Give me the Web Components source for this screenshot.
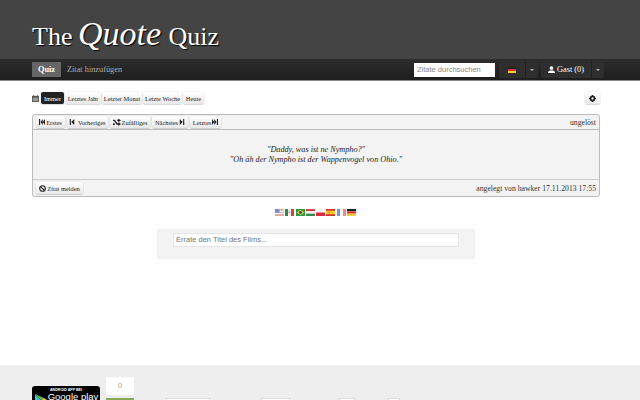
<!DOCTYPE html>
<html>
<head>
<meta charset="utf-8">
<title>The Quote Quiz</title>
<style>
    html, body { margin: 0; height: 400px; overflow: hidden; background: #fff; }
    body { font-family: "Liberation Serif", serif; display: flex; flex-direction: column; }
    quiz-main { flex: 1; }
</style>
</head>
<body>
<quiz-header></quiz-header>
<quiz-main></quiz-main>
<quiz-footer></quiz-footer>
<script>
{
    const flags = {
        de: '<rect width="12" height="3" fill="#222"/><rect y="3" width="12" height="3" fill="#d33"/><rect y="6" width="12" height="3" fill="#ec3"/>',
        us: '<rect width="12" height="9" fill="#e8a8a8"/><rect y="2" width="12" height="1.5" fill="#fff"/><rect y="5" width="12" height="1.5" fill="#fff"/><rect width="6" height="5" fill="#7a8fc8"/>',
        mx: '<rect width="4" height="9" fill="#2a8a50"/><rect x="4" width="4" height="9" fill="#f4f4f4"/><rect x="8" width="4" height="9" fill="#d84040"/><circle cx="6" cy="4.5" r="1" fill="#a87"/>',
        br: '<rect width="12" height="9" fill="#2a9a40"/><path d="M6 1 11 4.5 6 8 1 4.5z" fill="#ec3"/><circle cx="6" cy="4.5" r="1.8" fill="#247"/>',
        hu: '<rect width="12" height="3" fill="#d04848"/><rect y="3" width="12" height="3" fill="#f4f4f4"/><rect y="6" width="12" height="3" fill="#3a8a50"/>',
        pl: '<rect width="12" height="4.5" fill="#f4f4f4"/><rect y="4.5" width="12" height="4.5" fill="#e02840"/>',
        es: '<rect width="12" height="9" fill="#d83030"/><rect y="2.2" width="12" height="4.6" fill="#f6c820"/><rect x="3" y="3.4" width="2" height="2.2" fill="#b85"/>',
        fr: '<rect width="4" height="9" fill="#7a90d8"/><rect x="4" width="4" height="9" fill="#f6f6f6"/><rect x="8" width="4" height="9" fill="#e88"/>'
    };
    const flag = (code, w, h) => `<svg width="${w}" height="${h}" viewBox="0 0 12 9" preserveAspectRatio="none" style="display:block;flex:none">${flags[code]}</svg>`;

    // small glyph icons, 8x8
    const icons = {
        first: '<path d="M0 0h1.500v8H0zM2 4l3-4v8zM5 4l3-4v8z"/>',
        prev: '<path d="M1 0h1.500v8H1zM3 4l4-4v8z"/>',
        shuffle: '<path d="M0 1.500h2l3 4h1V4l3 2.200L6 8.400V7H4.200l-3-4H0zM0 5.500h1.500l.8 1-.8 1H0zM4.200 1.500H6V0l3 2.200L6 4.400V3H5z"/>',
        next: '<path d="M1 0l4 4-4 4zM5.500 0H7v8H5.500z"/>',
        last: '<path d="M0 0l3 4-3 4zM3 0l3 4-3 4zM6.500 0H8v8H6.500z"/>',
        ban: '<circle cx="4" cy="4" r="3.200" fill="none" stroke="currentColor" stroke-width="1.300"/><path d="M1.800 1.800l4.400 4.400" stroke="currentColor" stroke-width="1.300"/>',
        user: '<circle cx="4" cy="2.300" r="2.100"/><path d="M0 8c0-2.400 1.500-3 4-3s4 .6 4 3z"/>',
        cal: '<path d="M0 1h8v7H0z"/><path d="M1 3h6v4H1z" fill="#999"/><path d="M1.500 0h1v2h-1zM5.500 0h1v2h-1z"/>',
        cog: '<circle cx="4" cy="4" r="2.300" fill="none" stroke="currentColor" stroke-width="2"/><path d="M3.300 0h1.400v1.500H3.300zM3.300 6.500h1.400V8H3.300zM0 3.300h1.500v1.400H0zM6.500 3.300H8v1.400H6.500z"/>'
    };
    const icon = (name, size = 8) => `<svg width="${size}" height="${size}" viewBox="0 0 ${name === 'shuffle' ? 9 : 8} 8" fill="currentColor" style="display:block;flex:none">${icons[name]}</svg>`;

    window.customElements.define('quiz-button', class extends HTMLElement {
        constructor() {
            super();
            this.attachShadow({ mode: 'open' }).innerHTML = `
                <style>
                    :host {
                        display: inline-flex; align-items: center; justify-content: center; gap: 1px; height: 12px; box-sizing: border-box;
                        font-size: 6.4px; color: #222; white-space: nowrap; flex: none;
                        background: linear-gradient(#fff, #e8e8e8);
                        border-radius: 2px;
                        box-shadow: 0 0 0 .5px rgba(0,0,0,.08), 0 1px 1px rgba(0,0,0,.12);
                    }
                    :host([active]) { background: #222; color: #fff; }
                </style>
                <slot></slot>
            `;
        }
    });

    window.customElements.define('quiz-header', class extends HTMLElement {
        constructor() {
            super();
            this.attachShadow({ mode: 'open' }).innerHTML = `
                <style>
                    :host { display: block; }
                    .top { height: 59px; background: #444; box-sizing: border-box; padding: 16px 0 0 32px;
                        color: #fff; font-size: 26px; line-height: 36px; text-shadow: 1px 1px 1px #000; white-space: nowrap; }
                    .top i { font-size: 34px; margin: 0 1px 0 -1px; }
                    nav { height: 22px; box-sizing: border-box; background: linear-gradient(#2c2c2c, #1e1e1e); border-bottom: 1px solid #888;
                        display: flex; align-items: center; padding-left: 32px; padding-right: 36px; font-size: 8.300px; }
                    .tab { background: #666; color: #fff; height: 15px; width: 29px; display: flex; align-items: center;
                        justify-content: center; font-weight: bold; }
                    .link { color: #aaa; margin-left: 6px; }
                    .search { margin-left: auto; width: 81px; height: 14px; background: #fff; color: #888;
                        font: 7.500px/14px "Liberation Sans", sans-serif; padding-left: 3px; box-sizing: border-box; }
                    .split { display: flex; height: 17px; margin-left: 4px; border-radius: 2px; background: #2e2e2e; color: #fff; align-items: center; }
                    .main { display: flex; align-items: center; justify-content: center; gap: 2px; height: 100%; border-right: 1px solid #222; }
                    .caret { width: 12px; display: flex; justify-content: center; }
                    .caret::after { content: ""; border: 2px solid transparent; border-top-color: #bbb; border-bottom: 0; }
                </style>
                <div class="top">The <i>Quote</i> Quiz</div>
                <nav>
                    <div class="tab">Quiz</div>
                    <div class="link">Zitat hinzufügen</div>
                    <div class="search">Zitate durchsuchen</div>
                    <div class="split"><div class="main" style="width:26px">${flag('de', 8, 6)}</div><div class="caret"></div></div>
                    <div class="split" style="margin-left:3px"><div class="main" style="width:50px">${icon('user', 7)}Gast (0)</div><div class="caret"></div></div>
                </nav>
            `;
        }
    });

    window.customElements.define('quiz-main', class extends HTMLElement {
        constructor() {
            super();
            this.attachShadow({ mode: 'open' }).innerHTML = `
                <style>
                    :host { display: block; padding: 10px 40px 0 32px; }
                    .range { display: flex; align-items: center; height: 14px; color: #555; }
                    .group { display: flex; margin-left: 2px; gap: 1px; }
                    .spacer { flex: 1; }
                    .card { margin-top: 9px; background: #f3f3f3; border: 1px solid #bbb; border-radius: 3px; box-sizing: border-box; height: 83px;
                        display: flex; flex-direction: column; }
                    .bar { display: flex; align-items: center; height: 14px; padding: 0 3px; gap: 2px; font-size: 7.700px; color: #333; flex: none; }
                    .quote { flex: 1; border-top: 1px solid #bbb; border-bottom: 1px solid #ccc;
                        display: flex; flex-direction: column; justify-content: center; align-items: center;
                        font: italic 8.200px/10px "Liberation Serif", serif; color: #222; }
                    .foot { height: 16px; }
                    .flags { display: flex; justify-content: center; gap: 1.300px; margin: 12px 1px 0 0; }
                    .guess { width: 320px; height: 32px; margin: 12px auto 0; background: #f3f3f3; box-sizing: border-box;
                        padding: 4px 16px; border: 1px solid #fafafa; }
                    .input { height: 14px; box-sizing: border-box; background: #fff; border: 1px solid #e4e4e4; color: #777;
                        font: 7.500px/12px "Liberation Sans", sans-serif; padding-left: 2px; }
                </style>
                <div class="range">
                    ${icon('cal', 7)}
                    <div class="group">
                        <quiz-button active style="width:23px">Immer</quiz-button><quiz-button style="width:36px">Letztes Jahr</quiz-button><quiz-button style="width:40px">Letzter Monat</quiz-button><quiz-button style="width:39px">Letzte Woche</quiz-button><quiz-button style="width:21px">Heute</quiz-button>
                    </div>
                    <div class="spacer"></div>
                    <quiz-button style="width:15px">${icon('cog', 7)}</quiz-button>
                </div>
                <div class="card">
                    <div class="bar">
                        <quiz-button style="width:29px">${icon('first', 6)}Erstes</quiz-button>
                        <quiz-button style="width:41px">${icon('prev', 6)}&nbsp;Vorheriges</quiz-button>
                        <quiz-button style="width:40px">${icon('shuffle', 8)}Zufälliges</quiz-button>
                        <quiz-button style="width:36px">Nächstes ${icon('next', 6)}</quiz-button>
                        <quiz-button style="width:31px">Letztes${icon('last', 6)}</quiz-button>
                        <div class="spacer"></div><span>ungelöst</span>
                    </div>
                    <div class="quote">
                        <div>"Daddy, was ist ne Nympho?"</div>
                        <div>"Oh äh der Nympho ist der Wappenvogel von Ohio."</div>
                    </div>
                    <div class="bar foot">
                        <quiz-button style="width:47px">${icon('ban', 7)}Zitat melden</quiz-button>
                        <div class="spacer"></div><span>angelegt von hawker 17.11.2013 17:55</span>
                    </div>
                </div>
                <div class="flags">${['us', 'mx', 'br', 'hu', 'pl', 'es', 'fr', 'de'].map(c => flag(c, 9, 7)).join('')}</div>
                <div class="guess"><div class="input">Errate den Titel des Films...</div></div>
            `;
        }
    });

    window.customElements.define('quiz-footer', class extends HTMLElement {
        constructor() {
            super();
            this.attachShadow({ mode: 'open' }).innerHTML = `
                <style>
                    :host { display: flex; height: 35px; background: #eee; padding: 12px 0 0 32px; box-sizing: border-box;
                        overflow: hidden; align-items: flex-start; flex: none; }
                    .badge { width: 68px; height: 24px; margin-top: 9px; background: #000; border-radius: 3px 3px 0 0; color: #fff; overflow: hidden;
                        font: bold 3.600px/4px "Liberation Sans", sans-serif; text-align: center; padding-top: 2px; box-sizing: border-box; flex: none; position: relative; }
                    .badge span { display: block; }
                    .badge b { display: block; font: 9.500px/10px "Liberation Sans", sans-serif; padding-left: 14px; white-space: nowrap; }
                    .badge svg { position: absolute; left: 3px; top: 8px; }
                    .count { width: 28px; margin-left: 6px; flex: none; }
                    .num { height: 18px; background: #fff; color: #999; font: 7px/18px "Liberation Sans", sans-serif; text-align: center; }
                    .green { height: 10px; margin-top: 3px; background: #8a5; }
                    .box { height: 10px; margin-top: 21px; background: #fff; border: 1px solid #ddd; box-sizing: border-box; flex: none; }
                </style>
                <div class="badge"><span>ANDROID APP BEI</span><b>Google play</b><svg width="12" height="12" viewBox="0 0 12 12"><path d="M0 0l6 6-6 6z" fill="#4bc"/><path d="M0 0l9 4-3 2z" fill="#5b5"/><path d="M0 12l9-4-3-2z" fill="#d44"/><path d="M9 4l3 2-3 2-3-2z" fill="#ec3"/></svg></div>
                <div class="count"><div class="num">0</div><div class="green"></div></div>
                <div class="box" style="width:44px;margin-left:32px"></div>
                <div class="box" style="width:29px;margin-left:51px"></div>
                <div class="box" style="width:16px;margin-left:49px"></div>
                <div class="box" style="width:12px;margin-left:33px"></div>
            `;
        }
    });
}
</script>
</body>
</html>
